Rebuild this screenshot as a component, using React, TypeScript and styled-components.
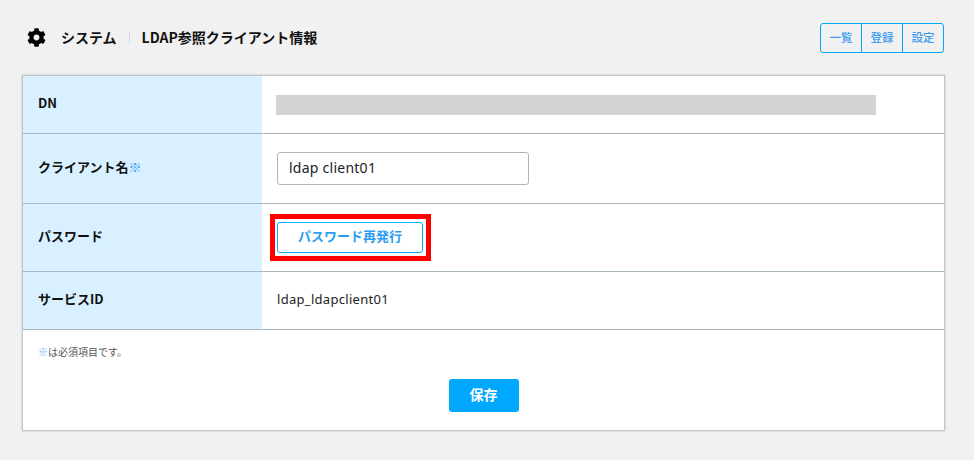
import React from 'react';
import styled, { createGlobalStyle } from 'styled-components';
import { FaCog } from 'react-icons/fa';

const GlobalStyle = createGlobalStyle`
    html, body {
        margin: 0;
        padding: 0;
        background: #f1f1f1;
        color: #111;
        font-family: "Noto Sans CJK JP", "Liberation Sans", sans-serif;
    }
    * {
        box-sizing: border-box;
    }
`;

const Page = styled.div`
    width: 974px;
    height: 460px;
    padding: 23px 30px 0 22px;
    overflow: hidden;
`;

const Header = styled.header`
    display: flex;
    align-items: center;
    justify-content: space-between;
    height: 30px;
    margin-bottom: 22px;
`;

const TitleGroup = styled.div`
    display: flex;
    align-items: center;
    padding: 0 0 2px 5px;
    font-size: 14px;
    font-weight: 700;
`;

const GearIcon = styled(FaCog)`
    width: 19px;
    height: 19px;
    margin-right: 15px;
    color: #000;
`;

const TitleDivider = styled.span`
    width: 1px;
    height: 11px;
    margin: 0 12px;
    background: #d4d4d4;
`;

const NavGroup = styled.nav`
    display: flex;
    height: 30px;
    border: 1px solid #00a7ff;
    border-radius: 3px;
`;

const NavItem = styled.a`
    display: flex;
    align-items: center;
    justify-content: center;
    width: 40px;
    padding-bottom: 2px;
    color: #3d9bf0;
    font-size: 11.5px;
    font-weight: 500;
    & + & {
        width: 41px;
        border-left: 1px solid #00a7ff;
    }
`;

const Card = styled.section`
    width: 923px;
    height: 356px;
    background: #fff;
    border: 1px solid #c4c4c4;
    box-shadow: 0 0 2px rgba(0, 0, 0, 0.2);
`;

const Row = styled.div<{ $height: number }>`
    display: grid;
    grid-template-columns: 239px 1fr;
    height: ${({ $height }) => $height}px;
    border-bottom: 1px solid #a9b7bf;
`;

const Label = styled.div`
    display: flex;
    align-items: center;
    padding: 0 0 4px 15px;
    background: #d8f0ff;
    font-size: 13px;
    font-weight: 700;
`;

const Required = styled.span`
    color: #2f9bf5;
    font-weight: 700;
`;

const Value = styled.div`
    display: flex;
    align-items: center;
    padding-left: 15px;
    font-size: 12px;
`;

const MaskedValue = styled.div`
    width: 600px;
    height: 20px;
    margin-left: -1px;
    background: #d4d4d4;
`;

const TextInput = styled.input`
    width: 252px;
    height: 33px;
    padding: 0 11px 2px;
    background: #fff;
    border: 1px solid #b5b5b5;
    border-radius: 3px;
    color: #222;
    font-family: "Noto Sans", "Liberation Sans", sans-serif;
    font-size: 14px;
    letter-spacing: 0.25px;
`;

const HighlightBox = styled.div`
    display: flex;
    margin-left: -7px;
    padding: 3px 3px 3px 2px;
    border: 5px solid #ff0000;
`;

const OutlineButton = styled.button`
    width: 146px;
    height: 31px;
    padding: 0 0 4px;
    background: #fff;
    border: 1px solid #00a7ff;
    border-radius: 3px;
    color: #2b9df2;
    font-family: inherit;
    font-size: 13px;
    font-weight: 700;
`;

const ServiceId = styled.span`
    margin-bottom: 4px;
    color: #222;
    font-family: "Noto Sans", "Liberation Sans", sans-serif;
    font-size: 13px;
    letter-spacing: 0.3px;
`;

const Footer = styled.div`
    display: flex;
    flex-direction: column;
    padding: 15px 15px 0;
`;

const Note = styled.p`
    margin: 0;
    color: #555;
    font-size: 10px;
    line-height: 13px;
`;

const NoteMark = styled.span`
    color: #7aaaff;
    font-weight: 700;
`;

const SaveButton = styled.button`
    align-self: center;
    width: 70px;
    height: 33px;
    margin-top: 21px;
    padding: 0 0 3px;
    background: #00a7ff;
    border: 0;
    border-radius: 3px;
    color: #fff;
    font-family: inherit;
    font-size: 14px;
    font-weight: 700;
`;

export default function App() {
    return (
        <Page>
            <GlobalStyle />
            <Header>
                <TitleGroup>
                    <GearIcon />
                    <span>システム</span>
                    <TitleDivider />
                    <span>LDAP参照クライアント情報</span>
                </TitleGroup>
                <NavGroup>
                    <NavItem>一覧</NavItem>
                    <NavItem>登録</NavItem>
                    <NavItem>設定</NavItem>
                </NavGroup>
            </Header>
            <Card>
                <Row $height={58}>
                    <Label>DN</Label>
                    <Value>
                        <MaskedValue />
                    </Value>
                </Row>
                <Row $height={70}>
                    <Label>
                        クライアント名<Required>※</Required>
                    </Label>
                    <Value>
                        <TextInput defaultValue="ldap client01" />
                    </Value>
                </Row>
                <Row $height={68}>
                    <Label>パスワード</Label>
                    <Value>
                        <HighlightBox>
                            <OutlineButton>パスワード再発行</OutlineButton>
                        </HighlightBox>
                    </Value>
                </Row>
                <Row $height={58}>
                    <Label>サービスID</Label>
                    <Value>
                        <ServiceId>ldap_ldapclient01</ServiceId>
                    </Value>
                </Row>
                <Footer>
                    <Note>
                        <NoteMark>※</NoteMark>は必須項目です。
                    </Note>
                    <SaveButton>保存</SaveButton>
                </Footer>
            </Card>
        </Page>
    );
}
